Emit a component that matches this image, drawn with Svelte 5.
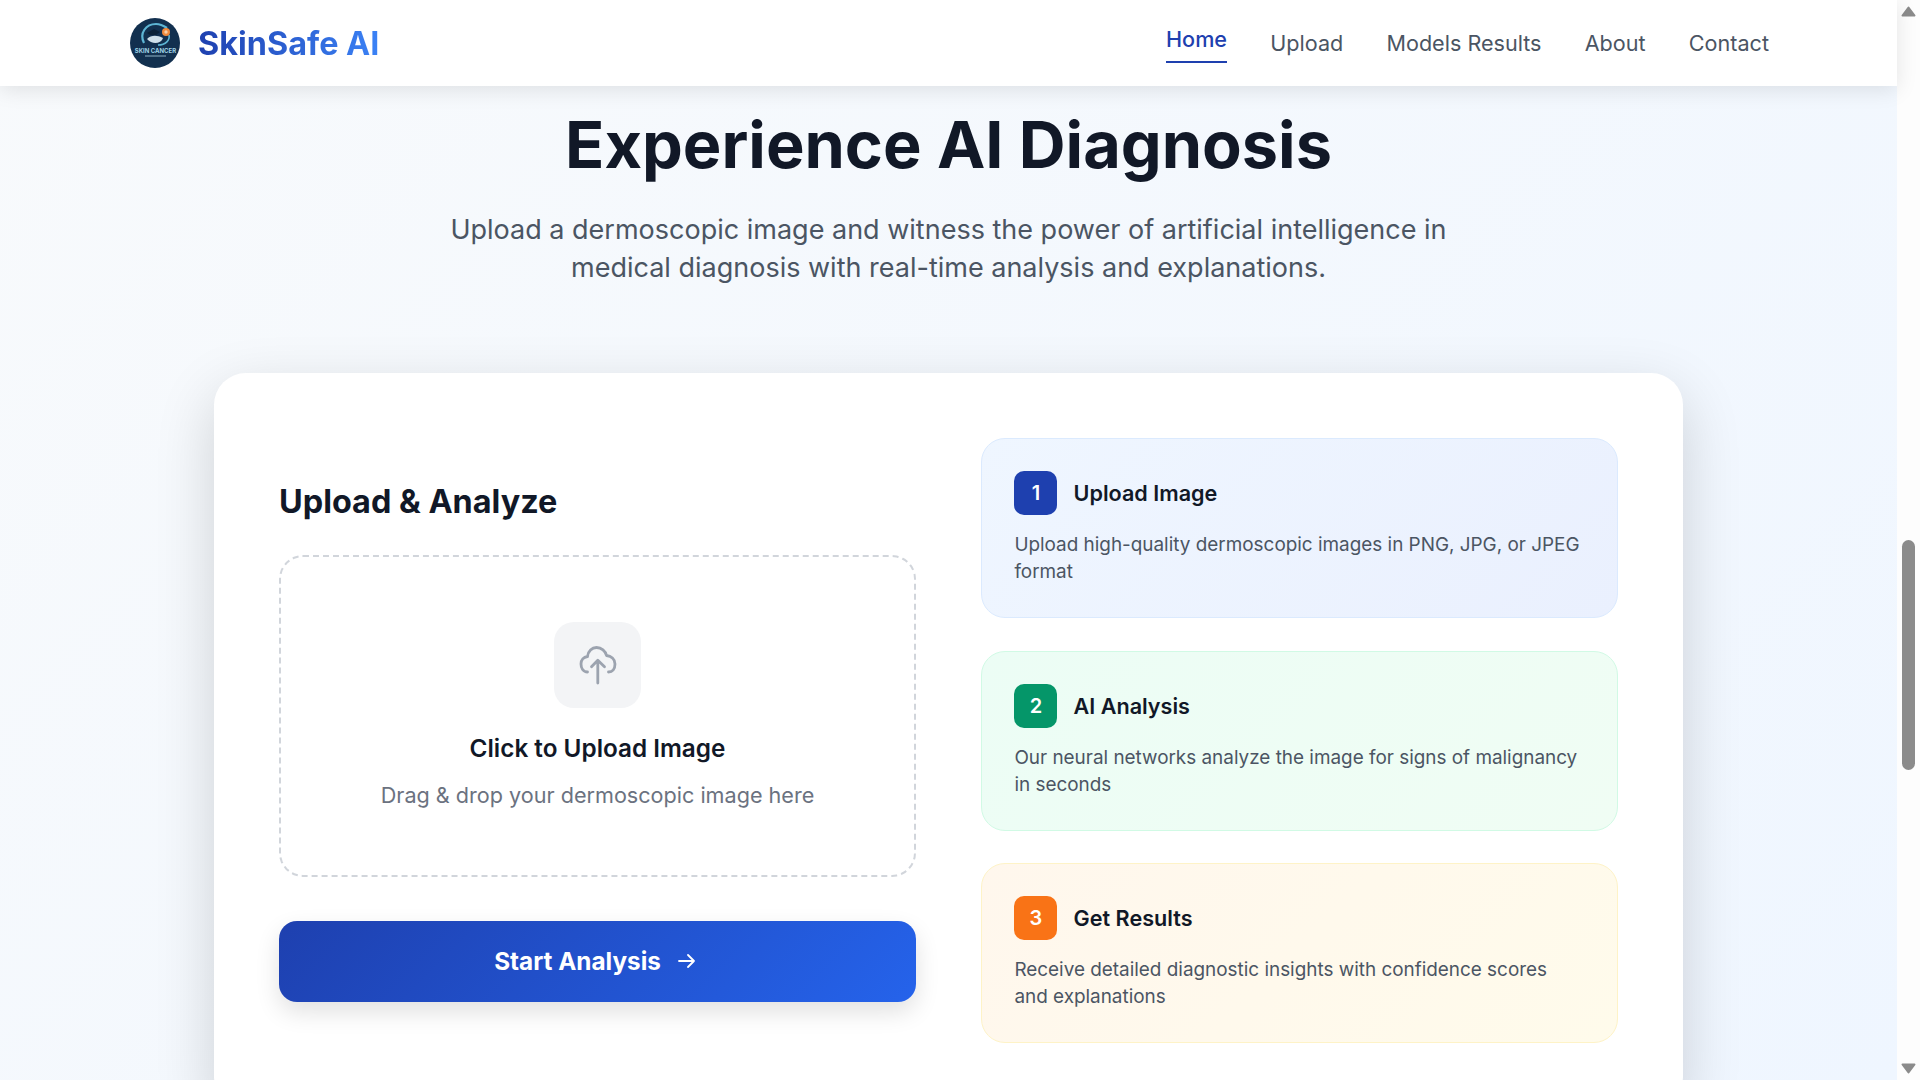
<script>
  const steps = [
    { n: 1, tone: 'blue', title: 'Upload Image', text: 'Upload high-quality dermoscopic images in PNG, JPG, or JPEG format' },
    { n: 2, tone: 'green', title: 'AI Analysis', text: 'Our neural networks analyze the image for signs of malignancy in seconds' },
    { n: 3, tone: 'orange', title: 'Get Results', text: 'Receive detailed diagnostic insights with confidence scores and explanations' }
  ];
  const links = ['Upload', 'Models Results', 'About', 'Contact'];
</script>

<div class="shell">
  <div class="page">
    <header>
      <div class="brand">
        <svg class="logo" viewBox="0 0 50 50" aria-hidden="true">
          <circle cx="25" cy="25" r="25" fill="#12304f" />
          <path d="M14 25 C9 15 16 6 26 6 C31 6 34 8 37 10" fill="none" stroke="#5db5d4" stroke-width="2.2" />
          <path d="M39 17 C40 22 36 27 28 27" fill="none" stroke="#5db5d4" stroke-width="1.6" />
          <path d="M17 15 L24 11 L30 14 L26 17 L20 17Z" fill="#0b2238" />
          <path d="M17 21 C21 17 27 17 33 20 C31 26 22 27 17 21Z" fill="#cfe0ea" />
          <circle cx="36" cy="14" r="4" fill="#f08a3c" />
          <circle cx="36" cy="14" r="1.7" fill="#f7d0a8" />
          <text x="25.5" y="35" text-anchor="middle" class="logo-text">SKIN CANCER</text>
          <rect x="15" y="37.5" width="21" height="1" fill="#8fb3c7" />
        </svg>
        <span class="name">SkinSafe AI</span>
      </div>
      <nav>
        <span class="link active">Home</span>
        {#each links as l}
          <span class="link">{l}</span>
        {/each}
      </nav>
    </header>

    <main>
      <section class="hero">
        <h1>Experience AI Diagnosis</h1>
        <p>Upload a dermoscopic image and witness the power of artificial intelligence in medical diagnosis with real-time analysis and explanations.</p>
      </section>

      <section class="card">
        <div class="left">
          <h2>Upload &amp; Analyze</h2>
          <div class="drop">
            <div class="icon-box">
              <svg width="40" height="40" viewBox="0 0 40 40" fill="none" stroke="#9ca3af" stroke-width="2.8" stroke-linecap="round" stroke-linejoin="round" aria-hidden="true">
                <path d="M9.5 27 C5 27 3 23 3 19 C3 15 5.5 12 9.5 11.5 C10 6 14 2.5 18.5 2.5 C23.5 2.5 27.5 6 28.5 10.5 C33 11 37 14 37 19 C37 24 34.5 27 30.5 27" />
                <path d="M19.8 38 V16 M13.5 21.7 L19.8 15.2 L26.5 21.7" />
              </svg>
            </div>
            <h3>Click to Upload Image</h3>
            <p>Drag &amp; drop your dermoscopic image here</p>
          </div>
          <button type="button">
            <span>Start Analysis</span>
            <svg width="17" height="14" viewBox="0 0 17 14" fill="none" stroke="#fff" stroke-width="1.8" stroke-linecap="round" stroke-linejoin="round" aria-hidden="true">
              <path d="M1 7h15M10 1l6 6-6 6" />
            </svg>
          </button>
        </div>
        <div class="right">
          {#each steps as s}
            <article class="step {s.tone}">
              <div class="step-head">
                <span class="badge">{s.n}</span>
                <h4>{s.title}</h4>
              </div>
              <p>{s.text}</p>
            </article>
          {/each}
        </div>
      </section>
    </main>
  </div>

  <aside class="scrollbar" aria-hidden="true">
    <svg class="arrow" width="15" height="11" viewBox="0 0 15 11"><path d="M7.5 1.5 L13.5 9.5 H1.5Z" fill="#8b8b8b" stroke="#8b8b8b" stroke-width="2" stroke-linejoin="round" /></svg>
    <div class="track"><div class="thumb"></div></div>
    <svg class="arrow" width="15" height="11" viewBox="0 0 15 11"><path d="M7.5 9.5 L13.5 1.5 H1.5Z" fill="#8b8b8b" stroke="#8b8b8b" stroke-width="2" stroke-linejoin="round" /></svg>
  </aside>
</div>

<style>
  :global(body) {
    margin: 0;
    font-family: Inter, "Liberation Sans", sans-serif;
  }
  .shell {
    display: flex;
    width: 1920px;
    height: 1080px;
    overflow: hidden;
  }
  .page {
    flex: 1;
    min-width: 0;
    background: linear-gradient(135deg, #f8fafc, #eff6ff);
  }
  header {
    position: relative;
    z-index: 2;
    height: 86px;
    box-sizing: border-box;
    padding: 0 128px 0 130px;
    display: flex;
    align-items: center;
    justify-content: space-between;
    background: #fff;
    box-shadow: 0 4px 20px rgba(0, 0, 0, 0.1);
  }
  .brand {
    display: flex;
    align-items: center;
    gap: 18px;
  }
  .logo {
    width: 50px;
    height: 50px;
    display: block;
  }
  .logo-text {
    font-size: 6px;
    font-weight: 700;
    fill: #9fd3e6;
  }
  .name {
    font-size: 32.4px;
    font-weight: 700;
    background: linear-gradient(90deg, #1e40af, #3b82f6);
    -webkit-background-clip: text;
    background-clip: text;
    color: transparent;
  }
  nav {
    display: flex;
    align-items: flex-start;
    gap: 43.2px;
  }
  .link {
    font-size: 21.6px;
    font-weight: 400;
    color: #4b5563;
    padding: 8px 0;
  }
  .link.active {
    color: #1e40af;
    font-weight: 500;
    margin-top: -4px;
    padding-bottom: 9px;
    margin-bottom: -7px;
    border-bottom: 2px solid #1e40af;
  }
  main {
    display: flex;
    flex-direction: column;
    align-items: center;
  }
  .hero {
    text-align: center;
    padding-top: 24px;
  }
  h1 {
    margin: 0;
    font-size: 64.8px;
    line-height: 70px;
    font-weight: 700;
    color: #111827;
  }
  .hero p {
    margin: 31px auto 0;
    width: 1040px;
    font-size: 27px;
    line-height: 38px;
    color: #4b5563;
  }
  .card {
    margin-top: 86px;
    width: 1469px;
    box-sizing: border-box;
    padding: 65px;
    display: grid;
    grid-template-columns: 1fr 1fr;
    gap: 65px;
    background: #fff;
    border-radius: 32px;
    box-shadow: 0 20px 60px rgba(0, 0, 0, 0.16);
  }
  .left {
    padding-top: 44px;
  }
  h2 {
    margin: 0 0 33px;
    font-size: 32.4px;
    line-height: 40px;
    font-weight: 700;
    color: #111827;
  }
  .drop {
    height: 322px;
    box-sizing: border-box;
    border: 2px dashed #d1d5db;
    border-radius: 24px;
    display: flex;
    flex-direction: column;
    align-items: center;
    padding-top: 65px;
  }
  .icon-box {
    width: 87px;
    height: 86px;
    border-radius: 20px;
    background: #f3f4f6;
    display: flex;
    align-items: center;
    justify-content: center;
  }
  h3 {
    margin: 24px 0 0;
    font-size: 24.3px;
    line-height: 32px;
    font-weight: 600;
    color: #111827;
  }
  .drop p {
    margin: 15px 0 0;
    font-size: 21.6px;
    line-height: 32px;
    color: #6b7280;
  }
  button {
    margin-top: 44px;
    width: 100%;
    height: 81px;
    border: 0;
    border-radius: 18px;
    padding: 0 6px 2px 0;
    background: linear-gradient(135deg, #1e40af, #2563eb);
    color: #fff;
    font-family: inherit;
    font-size: 24.3px;
    font-weight: 700;
    display: flex;
    align-items: center;
    justify-content: center;
    gap: 17px;
    box-shadow: 0 10px 25px rgba(0, 0, 0, 0.12);
  }
  .right {
    display: flex;
    flex-direction: column;
    gap: 32.6px;
  }
  .step {
    height: 180px;
    box-sizing: border-box;
    padding: 32px 32.4px;
    border: 1px solid;
    border-radius: 24px;
  }
  .step.blue {
    background: linear-gradient(135deg, #eff6ff, #eaf0fe);
    border-color: #dbeafe;
  }
  .step.green {
    background: linear-gradient(135deg, #ecfdf5, #f0fdf4);
    border-color: #d1fae5;
  }
  .step.orange {
    background: linear-gradient(135deg, #fff7ed, #fffbeb);
    border-color: #fef3c7;
  }
  .step-head {
    display: flex;
    align-items: center;
    gap: 16.2px;
  }
  .badge {
    width: 43px;
    height: 44px;
    border-radius: 10px;
    color: #fff;
    font-size: 20px;
    font-weight: 600;
    display: flex;
    align-items: center;
    justify-content: center;
  }
  .blue .badge { background: #1e40af; }
  .green .badge { background: #059669; }
  .orange .badge { background: #f97316; }
  h4 {
    margin: 0;
    font-size: 21.6px;
    font-weight: 600;
    color: #111827;
  }
  .step p {
    margin: 16px 0 0;
    font-size: 18.9px;
    line-height: 27px;
    color: #4b5563;
  }
  .scrollbar {
    width: 23px;
    background: #fdfdfd;
    display: flex;
    flex-direction: column;
    align-items: center;
    padding: 6px 0;
    box-sizing: border-box;
    gap: 4px;
  }
  .track {
    flex: 1;
    width: 13px;
    padding-top: 519px;
  }
  .thumb {
    height: 230px;
    border-radius: 7px;
    background: #8b8b8b;
  }
</style>
